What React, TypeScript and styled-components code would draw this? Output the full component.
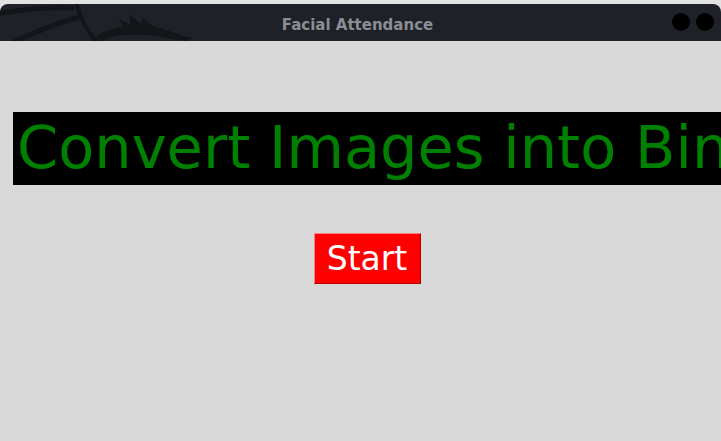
import styled, { createGlobalStyle } from "styled-components";

const Global = createGlobalStyle`
  html, body {
    margin: 0;
    padding: 0;
    background: #e2e2e2;
  }
  #root {
    width: 721px;
    height: 441px;
    overflow: hidden;
  }
`;

const Window = styled.div`
  display: flex;
  flex-direction: column;
  height: 437px;
  margin-top: 4px;
  background: #d9d9d9;
  border-radius: 8px 8px 0 0;
  overflow: hidden;
`;

const TitleBar = styled.div`
  position: relative;
  height: 37px;
  flex: none;
  display: flex;
  align-items: center;
  justify-content: center;
  background: #1f2128;
`;

const Dragon = styled.svg`
  position: absolute;
  left: 0;
  top: 0;
`;

const Title = styled.span`
  position: relative;
  font-family: "DejaVu Sans", sans-serif;
  font-weight: 700;
  font-size: 15px;
  color: #8c8d91;
  margin-right: 6px;
  top: 2px;
`;

const Controls = styled.div`
  position: absolute;
  right: 7px;
  top: 9px;
  display: flex;
  gap: 6px;
`;

const Dot = styled.span`
  width: 18px;
  height: 18px;
  border-radius: 50%;
  background: #000;
`;

const Body = styled.div`
  display: flex;
  flex-direction: column;
  padding-top: 71px;
`;

const Banner = styled.div`
  margin-left: 13px;
  height: 73px;
  background: #000;
  color: #008000;
  font-family: "DejaVu Sans", sans-serif;
  font-size: 59px;
  line-height: 72px;
  padding-left: 4px;
  white-space: nowrap;
  overflow: hidden;
`;

const ButtonRow = styled.div`
  display: flex;
  justify-content: center;
  padding-left: 13px;
  margin-top: 48px;
`;

const StartButton = styled.button`
  width: 107px;
  height: 51px;
  box-sizing: border-box;
  background: #ff0000;
  color: #fff;
  font-family: "DejaVu Sans", sans-serif;
  font-size: 33px;
  padding: 0;
  border-style: solid;
  border-width: 1px;
  border-color: #ff7f7f #b30000 #b30000 #ff7f7f;
`;

export default function App() {
  return (
    <>
      <Global />
      <Window>
        <TitleBar>
          <Dragon width="200" height="37" viewBox="0 0 200 37">
            <g fill="none" stroke="#131519" strokeLinecap="round">
              <path d="M-5 10 C 25 5, 50 3, 72 4" strokeWidth="5" />
              <path d="M10 40 C 35 28, 60 18, 80 13" strokeWidth="5" />
              <path d="M76 -2 C 80 14, 88 28, 96 38" strokeWidth="4" />
            </g>
            <path
              fill="#131519"
              d="M90 38 C 98 29, 110 24, 124 23 L 118 15 L 131 21 L 129 10 L 141 20 L 143 13 L 152 22 C 162 24, 172 28, 180 31 L 192 34 L 186 37 C 176 36, 166 34, 156 32 C 140 30, 120 30, 108 34 L 100 38 Z"
            />
          </Dragon>
          <Title>Facial Attendance</Title>
          <Controls>
            <Dot />
            <Dot />
          </Controls>
        </TitleBar>
        <Body>
          <Banner>Convert Images into Binary</Banner>
          <ButtonRow>
            <StartButton>Start</StartButton>
          </ButtonRow>
        </Body>
      </Window>
    </>
  );
}
